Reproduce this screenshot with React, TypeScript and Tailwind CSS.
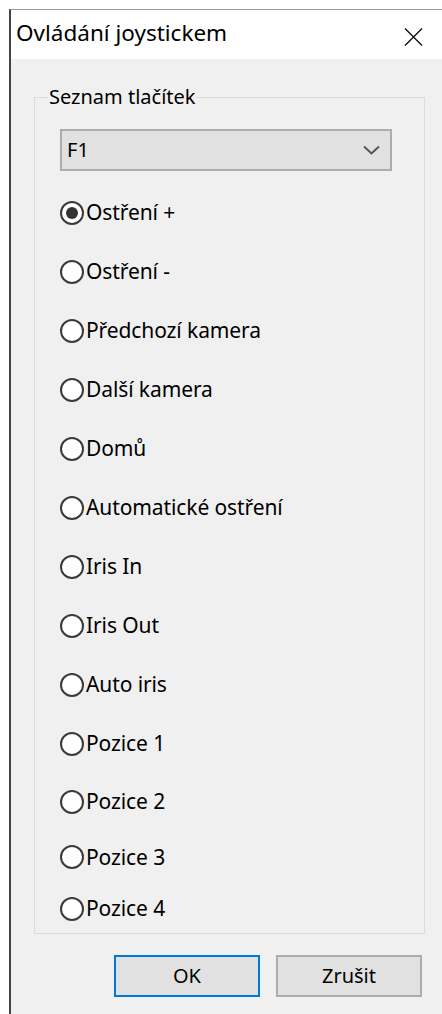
import { useState } from 'react'

const buttons = [
  'Ostření +',
  'Ostření -',
  'Předchozí kamera',
  'Další kamera',
  'Domů',
  'Automatické ostření',
  'Iris In',
  'Iris Out',
  'Auto iris',
  'Pozice 1',
  'Pozice 2',
  'Pozice 3',
  'Pozice 4',
]

// row heights of the radio list (the last two rows sit tighter)
const rowHeights = ['h-[59px]', 'h-[59px]', 'h-[59px]', 'h-[59px]', 'h-[59px]', 'h-[59px]', 'h-[59px]', 'h-[59px]', 'h-[59px]', 'h-[59px]', 'h-[57px]', 'h-[54px]', 'h-[49px]']

function Radio({ checked, label, onClick, rowClass }: { checked: boolean; label: string; onClick: () => void; rowClass: string }) {
  return (
    <label className={`flex items-center cursor-default ${rowClass}`} onClick={onClick}>
      <span className="w-[24px] h-[24px] rounded-full border-2 border-[#3a3a3a] bg-white flex items-center justify-center shrink-0">
        {checked && <span className="w-[12px] h-[12px] rounded-full bg-[#333333]" />}
      </span>
      <span className="ml-[2px] text-[21px] tracking-[-0.1px] text-black leading-none">{label}</span>
    </label>
  )
}

export default function App() {
  const [selected, setSelected] = useState(0)

  return (
    <div className="w-full h-[1014px] bg-white pl-[9px] pt-[9px] overflow-hidden" style={{ fontFamily: '"Noto Sans", "Open Sans", sans-serif' }}>
      <div className="h-full border-l-2 border-t border-l-[#444444] border-t-[#9a9a9a] bg-[#f0f0f0]">
        {/* title bar */}
        <div className="h-[49px] bg-white flex items-start justify-between pl-[5px] pr-[19px] pt-[12px]">
          <span className="text-[22.5px] leading-none text-black">Ovládání joystickem</span>
          <svg width="19" height="18" viewBox="0 0 19 18" className="mt-[6px]">
            <path d="M1 0.5 L18 17.5 M18 0.5 L1 17.5" stroke="#111" strokeWidth="1.4" />
          </svg>
        </div>

        <div className="pl-[23px] pr-[17px]">
          <fieldset className="mt-[26px] border border-[#dcdcdc]">
            <legend className="ml-[13px] px-[1px] text-[20px] leading-[24px] text-black">Seznam tlačítek</legend>

            <div className="pl-[25px] pr-[32px]">
              <div className="mt-[20px] h-[42px] border-2 border-[#adadad] bg-[#e1e1e1] flex items-center justify-between pl-[5px] pr-[10px]">
                <span className="text-[20px] text-black">F1</span>
                <svg width="17" height="10" viewBox="0 0 17 10">
                  <path d="M1 1.5 L8.5 8.5 L16 1.5" fill="none" stroke="#555" strokeWidth="2" />
                </svg>
              </div>

              <div className="mt-[12px] flex flex-col">
                {buttons.map((b, i) => (
                  <Radio key={b} label={b} checked={selected === i} onClick={() => setSelected(i)} rowClass={rowHeights[i]} />
                ))}
              </div>
            </div>
          </fieldset>

          <div className="mt-[21px] flex justify-end gap-[16px] pr-[3px]">
            <button className="w-[146px] h-[42px] border-2 border-[#0078d7] bg-[#e1e1e1] text-[20px] text-black">OK</button>
            <button className="w-[146px] h-[42px] border-2 border-[#adadad] bg-[#e1e1e1] text-[20px] text-black">Zrušit</button>
          </div>
        </div>
      </div>
    </div>
  )
}
